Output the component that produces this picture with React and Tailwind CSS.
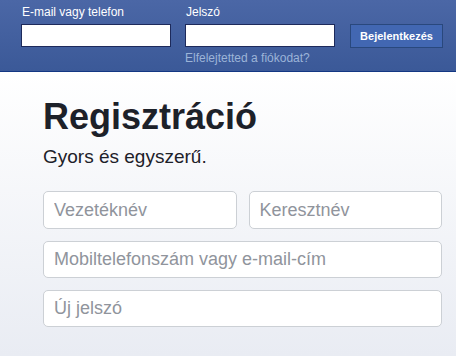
import React from "react";

export default function App() {
  const font = { fontFamily: '"Liberation Sans", Arial, sans-serif' };
  const inputCls =
    "h-[38px] w-full rounded-[5px] border border-[#ccd0d5] bg-white pl-[10px] text-[18px] text-[#1d2129] placeholder:text-[#90949c] outline-none";
  return (
    <div className="w-[456px] h-[356px] overflow-hidden flex flex-col" style={font}>
      <header className="h-[72px] shrink-0 border-b border-[#133783] bg-gradient-to-b from-[#4b67a6] to-[#3b5998] flex items-start pl-[21px]">
        <div className="flex flex-col">
          <label className="pl-[1px] pt-[5px] text-[12px] leading-[14px] text-white">E-mail vagy telefon</label>
          <input className="mt-[5px] h-[23px] w-[150px] bg-white border border-[#1d2a5b] outline-none" />
        </div>
        <div className="flex flex-col ml-[14px]">
          <label className="pl-[1px] pt-[5px] text-[12px] leading-[14px] text-white">Jelszó</label>
          <input type="password" className="mt-[5px] h-[23px] w-[150px] bg-white border border-[#1d2a5b] outline-none" />
          <a className="mt-[4px] text-[12px] leading-[14px] text-[#9cb4d8]">Elfelejtetted a fiókodat?</a>
        </div>
        <button className="ml-[15px] mt-[24px] h-[24px] w-[93px] bg-[#4267b2] border border-[#29487d] text-white font-bold text-[11px] leading-[14px] flex items-center justify-center">
          Bejelentkezés
        </button>
      </header>
      <main className="flex-1 bg-gradient-to-b from-white to-[#e9ecf3] pl-[43px] pt-[23px]">
        <h1 className="text-[36px] leading-[44px] font-bold text-[#1d2129]">Regisztráció</h1>
        <p className="mt-[6px] text-[19px] leading-[24px] text-[#1d2129]">Gyors és egyszerű.</p>
        <div className="mt-[22px] w-[399px] flex flex-col gap-[12px]">
          <div className="grid grid-cols-2 gap-[12px]">
            <input placeholder="Vezetéknév" className={inputCls} />
            <input placeholder="Keresztnév" className={inputCls} />
          </div>
          <input placeholder="Mobiltelefonszám vagy e-mail-cím" className={inputCls + " !h-[37px]"} />
          <input placeholder="Új jelszó" className={inputCls + " !h-[37px]"} />
        </div>
      </main>
    </div>
  );
}
